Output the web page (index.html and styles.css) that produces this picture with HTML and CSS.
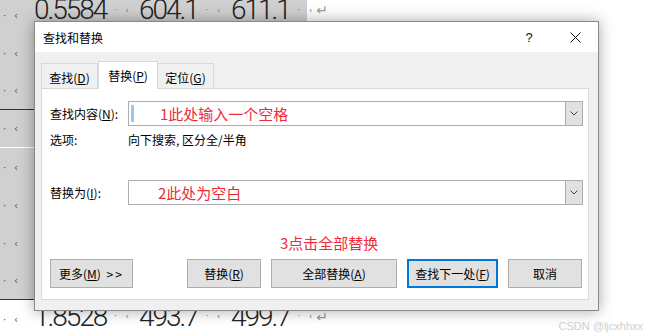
FILE: index.html
```
<!DOCTYPE html>
<html lang="zh-CN">
<head>
    <meta charset="UTF-8">
    <title>查找和替换</title>
    <link rel="stylesheet" href="styles.css">
</head>
<body>

<div class="page">
    <div class="doc">
        <div class="sheet">
            <div class="row r-top">
                <span class="mk">·</span><span class="mk">‹</span>
                <div class="cell"><span class="num">0.5584</span><span class="end">· ‹</span></div>
                <div class="cell"><span class="num">604.1</span><span class="end">· ‹</span></div>
                <div class="cell"><span class="num">611.1</span><span class="end">· ‹</span><span class="ret">↵</span></div>
            </div>
            <div class="row"><span class="mk">·</span><span class="mk">‹</span></div>
            <div class="row line-dark"><span class="mk">·</span><span class="mk">‹</span></div>
            <div class="row line-light"><span class="mk">·</span><span class="mk">‹</span></div>
            <div class="row"><span class="mk">·</span><span class="mk">‹</span></div>
            <div class="row"><span class="mk">·</span><span class="mk">‹</span></div>
            <div class="row"><span class="mk">·</span><span class="mk">‹</span></div>
            <div class="row line-dark"><span class="mk">·</span><span class="mk">‹</span></div>
        </div>
        <div class="row r-bottom">
            <span class="mk">·</span><span class="mk">‹</span>
            <div class="cell"><span class="num">1.8528</span><span class="end">· ‹</span></div>
            <div class="cell"><span class="num">493.7</span><span class="end">· ‹</span></div>
            <div class="cell"><span class="num">499.7</span><span class="end">· ‹</span><span class="ret">↵</span></div>
        </div>
    </div>

    <div class="dialog">
        <div class="titlebar">
            <span class="title">查找和替换</span>
            <span class="tb-help">?</span>
            <span class="tb-close">
                <svg width="11" height="11" viewBox="0 0 11 11"><path d="M0.5 0.5 L10.5 10.5 M10.5 0.5 L0.5 10.5" stroke="#111" stroke-width="1" fill="none"/></svg>
            </span>
        </div>
        <div class="body">
            <div class="tabs">
                <div class="tab t1">查找(<u>D</u>)</div>
                <div class="tab t2 active">替换(<u>P</u>)</div>
                <div class="tab t3">定位(<u>G</u>)</div>
            </div>
            <div class="panel">
                <div class="field">
                    <span class="label">查找内容(<u>N</u>):</span>
                    <div class="combo">
                        <span class="caret"></span>
                        <span class="note n1">1此处输入一个空格</span>
                        <span class="drop"><svg width="8" height="5" viewBox="0 0 8 5"><path d="M0.5 0.5 L4 4 L7.5 0.5" stroke="#444" stroke-width="1" fill="none"/></svg></span>
                    </div>
                </div>
                <div class="opts">
                    <span class="label">选项:</span>
                    <span>向下搜索, 区分全/半角</span>
                </div>
                <div class="field f2">
                    <span class="label">替换为(<u>I</u>):</span>
                    <div class="combo">
                        <span class="note n2">2此处为空白</span>
                        <span class="drop"><svg width="8" height="5" viewBox="0 0 8 5"><path d="M0.5 0.5 L4 4 L7.5 0.5" stroke="#444" stroke-width="1" fill="none"/></svg></span>
                    </div>
                </div>
                <div class="hint">3点击全部替换</div>
                <div class="buttons">
                    <button class="btn w-more">更多(<u>M</u>) <span class="arr">&gt;&gt;</span></button>
                    <div class="btn-group">
                        <button class="btn w-rep">替换(<u>R</u>)</button>
                        <button class="btn w-all">全部替换(<u>A</u>)</button>
                        <button class="btn w-next def">查找下一处(<u>F</u>)</button>
                        <button class="btn w-rep">取消</button>
                    </div>
                </div>
            </div>
        </div>
    </div>

    <div class="wm">CSDN @ljcxhhxx</div>
</div>

</body>
</html>
```

FILE: styles.css
```
body {
    margin: 0;
    font-family: "Noto Sans CJK SC", "Noto Sans", sans-serif;
    font-size: 12px;
    color: #000;
    background-color: #fff;
}
.page {
    position: relative;
    width: 649px;
    height: 336px;
    overflow: hidden;
}
.doc {
    margin-top: -4px;
}
.sheet {
    width: 307px;
    background-color: #d0d0d0;
}
.row {
    display: grid;
    grid-template-columns: 11px 23px 105px 92px auto;
    align-items: center;
    height: 38px;
    box-sizing: border-box;
}
.line-dark {
    border-bottom: 1px solid #333;
}
.line-light {
    border-bottom: 1px solid #fff;
}
.mk {
    color: #555;
    font-family: "DejaVu Sans", sans-serif;
    font-size: 10px;
    padding-left: 3px;
}
.cell {
    display: flex;
    align-items: center;
    white-space: nowrap;
}
.num {
    font-family: Roboto, sans-serif;
    font-weight: 300;
    font-size: 28px;
    line-height: 28px;
    letter-spacing: -2px;
    color: #222;
}
.end {
    margin-left: 8px;
    color: #777;
    font-size: 8px;
    font-family: "DejaVu Sans", sans-serif;
    letter-spacing: 3px;
}
.ret {
    color: #999;
    font-family: "DejaVu Sans", sans-serif;
    font-size: 14px;
    margin-left: 1px;
}
.r-top .cell {
    margin-top: -10px;
}
.r-bottom .cell {
    margin-top: -5px;
}

/* dialog */
.dialog {
    position: absolute;
    left: 34px;
    top: 21px;
    width: 565px;
    height: 290px;
    box-sizing: border-box;
    border: 1px solid #8a8a8a;
    background-color: #f0f0f0;
    box-shadow: 0 0 14px rgba(0, 0, 0, 0.35);
    display: flex;
    flex-direction: column;
}
.titlebar {
    height: 30px;
    background-color: #fff;
    display: flex;
    align-items: center;
    padding-left: 8px;
}
.title {
    flex: 1;
}
.tb-help {
    width: 46px;
    text-align: center;
    font-family: "Liberation Sans", sans-serif;
    font-size: 13px;
    color: #111;
}
.tb-close {
    width: 46px;
    height: 30px;
    display: flex;
    align-items: center;
    justify-content: center;
}
.body {
    flex: 1;
    display: flex;
    flex-direction: column;
    padding: 9px 9px 10px 6px;
}
.tabs {
    display: flex;
    align-items: flex-end;
    height: 27px;
}
.tab {
    height: 25px;
    box-sizing: border-box;
    border: 1px solid #d9d9d9;
    border-bottom: none;
    display: flex;
    align-items: center;
    justify-content: center;
    padding-top: 2px;
}
.tab + .tab {
    border-left: none;
}
.t1 { width: 57px; }
.t2 { width: 60px; }
.t3 { width: 56px; }
.tab.active {
    height: 28px;
    margin-bottom: -1px;
    background-color: #fff;
    border-left: 1px solid #d9d9d9;
    position: relative;
    z-index: 1;
    padding-top: 0;
}
.tab.active + .tab {
    border-left: none;
}
.panel {
    flex: 1;
    background-color: #fff;
    border: 1px solid #d9d9d9;
    padding: 12px 5px 0 8px;
    display: flex;
    flex-direction: column;
}
.label {
    width: 78px;
    flex-shrink: 0;
}
.field {
    display: flex;
    align-items: center;
    height: 25px;
}
.f2 {
    margin-top: 32px;
}
.combo {
    flex: 1;
    height: 25px;
    box-sizing: border-box;
    border: 1px solid #adadad;
    display: flex;
    align-items: center;
    padding-left: 2px;
}
.caret {
    width: 3px;
    height: 17px;
    background-color: #99c9ef;
}
.note {
    color: #ef2b3b;
    font-size: 15px;
}
.n1 {
    margin-left: 26px;
}
.n2 {
    margin-left: 27px;
}
.drop {
    margin-left: auto;
    width: 17px;
    height: 100%;
    box-sizing: border-box;
    background-color: #e1e1e1;
    border-left: 1px solid #adadad;
    display: flex;
    align-items: center;
    justify-content: center;
}
.opts {
    display: flex;
    margin-top: 6px;
    line-height: 16px;
}
.hint {
    margin-top: 28px;
    margin-left: 230px;
    line-height: 20px;
    color: #ef2b3b;
    font-size: 15px;
}
.buttons {
    margin-top: 6px;
    display: flex;
    justify-content: space-between;
    padding-right: 1px;
}
.btn-group {
    display: flex;
    gap: 10px;
}
.btn {
    height: 29px;
    box-sizing: border-box;
    background-color: #e1e1e1;
    border: 1px solid #adadad;
    font-family: inherit;
    font-size: 12px;
    color: #000;
    padding: 0;
}
.btn.def {
    border: 2px solid #0078d7;
}
.arr {
    letter-spacing: 2px;
    margin-left: 3px;
}
.w-more { width: 83px; }
.w-rep { width: 74px; }
.w-all { width: 126px; }
.w-next { width: 91px; }
.wm {
    position: absolute;
    right: 6px;
    bottom: 4px;
    font-family: "Liberation Sans", sans-serif;
    font-size: 11px;
    color: #cfcfcf;
}
```
